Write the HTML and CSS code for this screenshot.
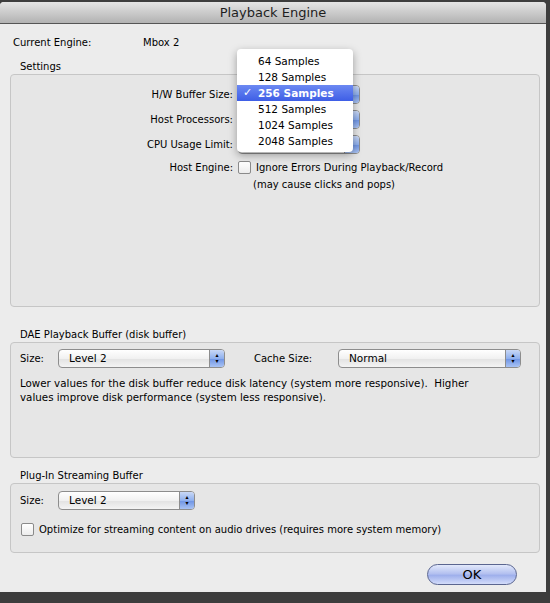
FILE: index.html
```
<!DOCTYPE html>
<html>
<head>
    <meta charset="utf-8">
    <title>Playback Engine</title>
    <link rel="stylesheet" href="styles.css">
</head>
<body>
<div class="window">
    <div class="titlebar">Playback Engine</div>
    <div class="content">
        <div class="engine-row">
            <span class="engine-label">Current Engine:</span>
            <span>Mbox 2</span>
        </div>

        <div class="group-title">Settings</div>
        <div class="group-box settings-box">
            <div class="form-grid">
                <div class="form-label">H/W Buffer Size:</div>
                <div class="select small"><span class="select-text"></span><span class="stepper"></span></div>
                <div class="form-label">Host Processors:</div>
                <div class="select small"><span class="select-text"></span><span class="stepper"></span></div>
                <div class="form-label">CPU Usage Limit:</div>
                <div class="select small"><span class="select-text"></span><span class="stepper"></span></div>
                <div class="form-label">Host Engine:</div>
                <div class="check-row">
                    <span class="checkbox"></span>
                    <span>Ignore Errors During Playback/Record</span>
                </div>
            </div>
            <div class="note">(may cause clicks and pops)</div>
        </div>

        <div class="group-title dae-title">DAE Playback Buffer (disk buffer)</div>
        <div class="group-box dae-box">
            <div class="control-row">
                <span class="row-label">Size:</span>
                <div class="select size-select"><span class="select-text">Level 2</span><span class="stepper">&#9652;<br>&#9662;</span></div>
                <span class="row-label cache-label">Cache Size:</span>
                <div class="select cache-select"><span class="select-text">Normal</span><span class="stepper">&#9652;<br>&#9662;</span></div>
            </div>
            <p class="help">Lower values for the disk buffer reduce disk latency (system more responsive).&nbsp; Higher<br>values improve disk performance (system less responsive).</p>
        </div>

        <div class="group-title plugin-title">Plug-In Streaming Buffer</div>
        <div class="group-box plugin-box">
            <div class="control-row">
                <span class="row-label">Size:</span>
                <div class="select plugin-select"><span class="select-text">Level 2</span><span class="stepper">&#9652;<br>&#9662;</span></div>
            </div>
            <div class="check-row optimize">
                <span class="checkbox"></span>
                <span>Optimize for streaming content on audio drives (requires more system memory)</span>
            </div>
        </div>

        <div class="buttons">
            <button class="ok-button">OK</button>
        </div>
    </div>

    <!-- open popup for the buffer size menu -->
    <ul class="popup">
        <li>64 Samples</li>
        <li>128 Samples</li>
        <li class="selected"><span class="check">&#10003;</span>256 Samples</li>
        <li>512 Samples</li>
        <li>1024 Samples</li>
        <li>2048 Samples</li>
    </ul>
</div>
</body>
</html>
```

FILE: styles.css
```
body {
    margin: 0;
    background-color: #3d3d3d;
    font-family: "DejaVu Sans", sans-serif;
    font-size: 10px;
    color: #000;
}

.window {
    position: relative;
    width: 546px;
    height: 590px;
    margin-top: 2px;
    background-color: #ececec;
    border-radius: 4px 4px 0 0;
    overflow: hidden;
}

.titlebar {
    height: 21px;
    line-height: 21px;
    text-align: center;
    font-size: 13px;
    color: #1e1e1e;
    background: linear-gradient(#e4e4e4, #b2b2b2);
    border-bottom: 1px solid #555;
}

.content {
    padding: 0 6px 0 10px;
}

.engine-row {
    display: flex;
    padding: 12px 0 0 3px;
    height: 14px;
    line-height: 14px;
}

.engine-label {
    width: 130px;
}

.group-title {
    padding-left: 10px;
    height: 14px;
    line-height: 14px;
    margin-top: 10px;
}

.group-box {
    background-color: #e6e6e6;
    border: 1px solid #c6c6c6;
    border-radius: 4px;
    box-sizing: border-box;
    width: 530px;
}

.settings-box {
    height: 233px;
    padding-top: 10px;
}

.form-grid {
    display: grid;
    grid-template-columns: 222px auto;
    column-gap: 5px;
    row-gap: 6px;
    align-items: center;
}

.form-label {
    text-align: right;
}

.select {
    display: flex;
    height: 19px;
    box-sizing: border-box;
    border: 1px solid #8d8d8d;
    border-radius: 4px;
    background: linear-gradient(#ffffff, #f1f1f1 50%, #e2e2e2 51%, #f4f4f4);
    overflow: hidden;
}

.select.small {
    width: 122px;
}

.select-text {
    flex: 1;
    padding-left: 10px;
    line-height: 17px;
    font-size: 10.5px;
}

.stepper {
    width: 15px;
    border-left: 1px solid #8d8d8d;
    background: linear-gradient(#c9d8f6, #8fb0ee 50%, #6d93e4 51%, #a9c3f4);
    font-size: 6px;
    line-height: 6px;
    text-align: center;
    padding-top: 2px;
    box-sizing: border-box;
}

.check-row {
    display: flex;
    align-items: center;
    gap: 5px;
    height: 15px;
}

.checkbox {
    width: 13px;
    height: 13px;
    border: 1px solid #8a8a8a;
    border-radius: 2px;
    background: linear-gradient(#ffffff, #ececec);
    box-sizing: border-box;
}

.note {
    padding-left: 242px;
    margin-top: 4px;
}

.dae-title {
    margin-top: 21px;
}

.dae-box {
    height: 116px;
    padding: 6px 9px 0;
}

.control-row {
    display: flex;
    align-items: center;
}

.row-label {
    width: 38px;
}

.size-select {
    width: 167px;
}

.cache-label {
    width: 84px;
    margin-left: 29px;
}

.cache-select {
    width: 183px;
}

.help {
    margin: 8px 0 0;
    line-height: 14px;
    font-size: 10.3px;
}

.plugin-title {
    margin-top: 11px;
}

.plugin-box {
    height: 70px;
    padding: 7px 9px 0;
}

.plugin-select {
    width: 137px;
}

.optimize {
    margin-top: 12px;
    padding-left: 1px;
}

.buttons {
    display: flex;
    justify-content: flex-end;
    padding: 11px 23px 0 0;
}

.ok-button {
    width: 90px;
    height: 21px;
    border: 1px solid #5b6690;
    border-radius: 11px;
    background: linear-gradient(#e3e9fb, #b4c1f0 45%, #9fb0ec 55%, #d3dcfa);
    font-family: "DejaVu Sans", sans-serif;
    font-size: 13px;
    color: #000;
    padding: 0;
}

.popup {
    position: absolute;
    left: 237px;
    top: 47px;
    width: 116px;
    margin: 0;
    padding: 4px 0 3px;
    list-style: none;
    background-color: #fff;
    border-radius: 4px;
    box-shadow: 0 3px 8px rgba(0, 0, 0, 0.35);
    font-size: 10.5px;
}

.popup li {
    position: relative;
    height: 16px;
    line-height: 16px;
    padding-left: 21px;
}

.popup li.selected {
    background: linear-gradient(#6c89f2, #3e5ee6);
    color: #fff;
    font-weight: 600;
}

.check {
    position: absolute;
    left: 6px;
    font-size: 11px;
}
```
